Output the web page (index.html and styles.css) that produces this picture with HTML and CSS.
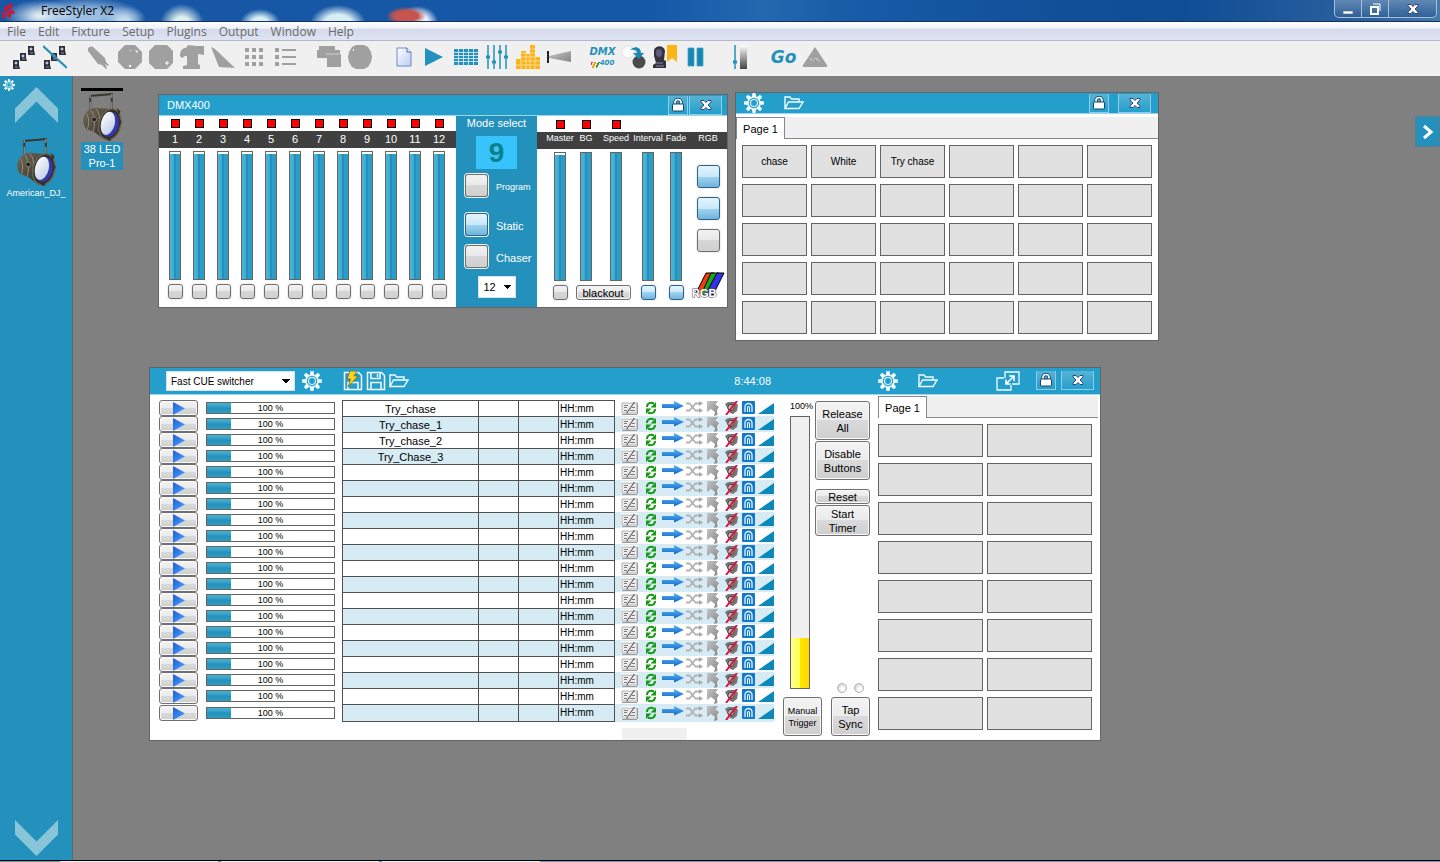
FILE: index.html
```
<!DOCTYPE html>
<html lang="en">
<head>
    <meta charset="UTF-8">
    <meta name="viewport" content="width=device-width, initial-scale=1">
    <title>FreeStyler X2</title>
    <link rel="stylesheet" href="styles.css">
</head>
<body>
    <!-- Shared icons -->
    <svg class="sprite" width="0" height="0" aria-hidden="true">
        <defs>
            <linearGradient id="gBlue" x1="0" y1="0" x2="0" y2="1"><stop offset="0" stop-color="#5cb8f4"/><stop offset="1" stop-color="#0a66c8"/></linearGradient>
            <linearGradient id="gPlay" x1="0" y1="0" x2="1" y2="1"><stop offset="0" stop-color="#1a5fd0"/><stop offset="1" stop-color="#4aa8ff"/></linearGradient>
            <linearGradient id="gGrey" x1="0" y1="0" x2="1" y2="1"><stop offset="0" stop-color="#c4c4c4"/><stop offset="1" stop-color="#858585"/></linearGradient>
            <linearGradient id="gFade" x1="0" y1="0" x2="0" y2="1"><stop offset="0" stop-color="#ffffff"/><stop offset="1" stop-color="#444444"/></linearGradient>
            <linearGradient id="gDoc" x1="0" y1="0" x2="1" y2="1"><stop offset="0" stop-color="#ffffff"/><stop offset="1" stop-color="#b9cdf5"/></linearGradient>
            <linearGradient id="gLens" x1="0" y1="0" x2="1" y2="1"><stop offset="0" stop-color="#ffffff"/><stop offset="1" stop-color="#b9cbe2"/></linearGradient>
            <linearGradient id="gBody" x1="0" y1="0" x2="1" y2="1"><stop offset="0" stop-color="#726a5b"/><stop offset="1" stop-color="#2b251d"/></linearGradient>
        </defs>
        <symbol id="gear" viewBox="0 0 20 20">
            <g fill="#f4fbff">
                <path id="tooth" d="M8.500 0h3l.6 4H7.900z"/>
                <use href="#tooth" transform="rotate(45 10 10)"/><use href="#tooth" transform="rotate(90 10 10)"/>
                <use href="#tooth" transform="rotate(135 10 10)"/><use href="#tooth" transform="rotate(180 10 10)"/>
                <use href="#tooth" transform="rotate(225 10 10)"/><use href="#tooth" transform="rotate(270 10 10)"/>
                <use href="#tooth" transform="rotate(315 10 10)"/>
            </g>
            <circle cx="10" cy="10" r="6" fill="#249fcc" stroke="#f4fbff" stroke-width="1.500"/>
            <circle cx="10" cy="10" r="3.500" fill="none" stroke="#e4f6ff" stroke-width="1.100"/>
        </symbol>
        <symbol id="folder" viewBox="0 0 20 20">
            <path d="M1 15.500V4h5l1.500 2H15v3M1 15.500 4.500 9H19l-4 6.500z" fill="none" stroke="#f4fbff" stroke-width="1.400"/>
        </symbol>
        <symbol id="disk" viewBox="0 0 20 20">
            <path d="M1.500 1.500h14l3 3v14h-17zM5 1.500v6h9v-6M5 18.500v-7h10v7M11.500 3v3" fill="none" stroke="#f4fbff" stroke-width="1.500"/>
        </symbol>
        <symbol id="flashdisk" viewBox="0 0 20 20">
            <path d="M1.500 1.500h14l3 3v14h-17zM5 18.500v-7h10v7" fill="none" stroke="#f4fbff" stroke-width="1.500"/>
            <path d="M7 0h7l-3 5h4L5 16l2.500-8H4z" fill="#ffd21c" stroke="#6b5a1c" stroke-width=".7"/>
        </symbol>
        <symbol id="expand" viewBox="0 0 24 20">
            <path d="M9 7V1h14v12h-7M8 7H1v12h14v-5" fill="none" stroke="#f4fbff" stroke-width="1.300"/>
            <path d="m10.500 12.500 7-7M13 5h5v5M10 8.500V13h4.500" fill="none" stroke="#fff" stroke-width="1.600"/>
        </symbol>
        <symbol id="lock" viewBox="0 0 14 14">
            <path d="M4 7V4.500a3 3 0 0 1 6 0V7" fill="none" stroke="#17446e" stroke-width="3.400"/>
            <path d="M4 7V4.500a3 3 0 0 1 6 0V7" fill="none" stroke="#fff" stroke-width="1.700"/>
            <rect x="1.500" y="6" width="11" height="7" rx="1" fill="#fff" stroke="#17446e"/>
        </symbol>
        <symbol id="cross" viewBox="0 0 12 12">
            <path d="M1 1.500h3l2 2 2-2h3v1.500L8 6l3 3v1.500H8l-2-2-2 2H1V9l3-3-3-3z" fill="#fff" stroke="#31457f"/>
        </symbol>
        <symbol id="parcan" viewBox="0 0 42 52">
            <path d="M9 20V4M31 20V3M8 5 32 3" fill="none" stroke="#3a362f" stroke-width="2"/>
            <path d="M9 20V4M31 20V3" fill="none" stroke="#c5c1b6" stroke-width=".8" stroke-dasharray="9 4"/>
            <path d="M3 25c-2 5-1 10 2 14l7 2 12 9 10-20-7-12-12-1C10 17 5 20 3 25z" fill="url(#gBody)"/>
            <path d="M5 23c3 4 3 11 1 16M10 20c4 6 4 14 2 21M15 18c3 4 4 9 3 13" fill="none" stroke="#958d7d" stroke-width="1"/>
            <circle cx="13" cy="29" r="2.500" fill="#211d18" stroke="#8d867a"/>
            <ellipse cx="29" cy="34" rx="11" ry="16" transform="rotate(14 29 34)" fill="#332e26" stroke="#6b6454" stroke-width="1.500"/>
            <ellipse cx="29" cy="34" rx="9" ry="13" transform="rotate(14 29 34)" fill="#3438a8"/>
            <ellipse cx="27" cy="33" rx="7" ry="12" transform="rotate(14 27 33)" fill="url(#gLens)"/>
            <path d="m36 17 4 4-2 4zM24 47l4 4 3-1zM39 29l2 2-1 4z" fill="#39342b"/>
        </symbol>
        <symbol id="play" viewBox="0 0 12 13"><path d="M0 0l12 6.500L0 13z" fill="url(#gPlay)"/></symbol>
        <symbol id="notes" viewBox="0 0 17 14">
            <rect width="17" height="14" fill="#fff"/>
            <path d="M1 2h6l1 1 1-1h7v10H9l-1 1-1-1H1z" fill="#ececec" stroke="#b4b4b4"/>
            <path d="M3 4.500h4M3 6.500h3M3 9.500h3M9 9.500h5M11 6.500h3" stroke="#7c7c7c"/>
            <path d="M13.500 1 5.500 12.500" stroke="#5f5f5f" stroke-width="1.200"/>
            <path d="M1 13.500h15M16.500 2v11" stroke="#999" fill="none"/>
        </symbol>
        <symbol id="cycle" viewBox="0 0 12 14">
            <path d="M2 6C2 2 6 1 9 2.500M10 8c0 4-4 5-7 3.500" fill="none" stroke="#129a12" stroke-width="2"/>
            <path d="M11 1v5.500H5.500zM1 13V7.500h5.500z" fill="#129a12"/>
        </symbol>
        <symbol id="arrow" viewBox="0 0 22 10"><path d="M0 3h12V0l10 5-10 4.500V7H0z" fill="url(#gBlue)"/></symbol>
        <symbol id="shuffle" viewBox="0 0 17 12">
            <path d="M0 2.500h3.500l6 7H14M0 9.500h3.500l6-7H14" fill="none" stroke="#b4b4b4" stroke-width="1.800"/>
            <path d="M13 0l4 2.500L13 5zM13 7l4 2.500-4 2.500z" fill="#a8a8a8"/>
        </symbol>
        <symbol id="pointer" viewBox="0 0 12 15">
            <path d="M0 0h11L8.500 3.500 12 6l-2 3 .5 5L7 15l1-4-4-3-4 3z" fill="url(#gGrey)"/>
        </symbol>
        <symbol id="mute" viewBox="0 0 13 14">
            <path d="M0 3l3-2h7l3 3-1 6-4 3-3-1z" fill="#777"/>
            <circle cx="6" cy="6.500" r="3.200" fill="#b9b9b9" stroke="#3f3f3f"/>
            <path d="M12 0 1 14" stroke="#e0103a" stroke-width="2"/>
        </symbol>
        <symbol id="magnet" viewBox="0 0 13 13">
            <rect width="13" height="13" rx="1" fill="#1179cf"/>
            <path d="M3 11V6a3.500 3.500 0 0 1 7 0v5" fill="none" stroke="#e8f6ff" stroke-width="1.300"/>
            <path d="M5.500 11V6.500a1 1 0 0 1 2 0V11" fill="none" stroke="#e8f6ff" stroke-width="1.100"/>
        </symbol>
        <symbol id="ramp" viewBox="0 0 16 13"><path d="M0 13 16 2v11z" fill="#0d88b8"/></symbol>
        <symbol id="chain" viewBox="0 0 24 24">
            <g fill="#2a2e38"><path d="M1 15h6v5l1 4H1v-3zM8 8h6v5l1 3H8v-3zM16 1h6v4l1 5h-7V6z"/></g>
            <path d="M3 17h2v2H3zM3 22h3M10 10h2v2h-2zM10 14h3M18 3h2v2h-2zM18 8h3" fill="#dfe7f7" stroke="#a9b4cc" stroke-width=".8"/>
        </symbol>
    </svg>

    <header class="app-title">
        <svg class="app-logo" viewBox="0 0 16 16"><path d="M8 7C6 3 9 0 12 1c2 3-1 5-4 6zM8 8C4 8 3 5 5 3c3 0 3 3 3 5zM8 9c-3-2-7 0-7 2 3 2 6 1 7-2zM8 9c2-3 6-2 7 0-1 3-5 3-7 0zM8 9c3 1 4 4 2 6-3 0-3-4-2-6zM7 10c0 3-2 6-5 5-1-3 2-5 5-5z" fill="#c9183a"/></svg>
        <h1>FreeStyler X2</h1>
        <div class="app-controls">
            <button type="button" aria-label="Minimize"><svg width="12" height="12" viewBox="0 0 12 12"><path d="M1 8h10v3H1z" fill="#fff" stroke="#4b6280" stroke-width=".6"/></svg></button>
            <button type="button" aria-label="Restore"><svg width="12" height="12" viewBox="0 0 12 12"><path d="M4 1h7v7" fill="none" stroke="#fff"/><path d="M2 4h7v7H2z" fill="none" stroke="#fff" stroke-width="2"/></svg></button>
            <button type="button" class="wide" aria-label="Close"><svg width="12" height="12"><use href="#cross"/></svg></button>
        </div>
    </header>

    <nav class="menu">
        <a href="#">File</a>
        <a href="#">Edit</a>
        <a href="#">Fixture</a>
        <a href="#">Setup</a>
        <a href="#">Plugins</a>
        <a href="#">Output</a>
        <a href="#">Window</a>
        <a href="#">Help</a>
    </nav>

    <div class="toolbar">
        <div class="tools">
            <button type="button" aria-label="Select all"><svg viewBox="0 0 24 24"><use href="#chain"/></svg></button>
            <button type="button" aria-label="Deselect all"><svg viewBox="0 0 24 24"><use href="#chain"/><path d="m0 1 24 22" stroke="#2391bb" stroke-width="2.200"/></svg></button>
        </div>
        <div class="tools grey">
            <button type="button" aria-label="Lamp"><svg viewBox="0 0 24 24"><path d="M1 4c0-2 3-3 5-2l12 11 1 4 3 3-1 1-3-2 2 4-1 1-4-4-4-1L1 6z"/></svg></button>
            <button type="button" aria-label="Color"><svg viewBox="0 0 24 24"><path d="M7 0h10l7 7v10l-7 7H7l-7-7V7z"/><path d="m17 5 3 1-1 2zM12 5h1v1h-1zM11 20h2v2h-2z" fill="#fff"/></svg></button>
            <button type="button" aria-label="Gobo"><svg viewBox="0 0 24 24"><path d="M6 0h12l6 6v12l-6 6H6l-6-6V6z"/><path d="M17 17h2v2h-2z" fill="none" stroke="#fff"/></svg></button>
            <button type="button" aria-label="Position"><svg viewBox="0 0 24 24"><path d="M0 11C0 5 3 3 6 3l2-3 8 1h8v9l-6-1v10l2 1v4H3v-3l4-1v-9H5l-3 2z"/></svg></button>
            <button type="button" aria-label="Beam"><svg viewBox="0 0 24 24"><path d="m0 2 4 2 20 19-16-1z"/></svg></button>
            <button type="button" aria-label="Matrix"><svg viewBox="0 0 24 24"><path d="M3 3h4v4H3zM10 3h4v4h-4zM17 3h4v4h-4zM3 10h4v4H3zM10 10h4v4h-4zM17 10h4v4h-4zM3 17h4v4H3zM10 17h4v4h-4zM17 17h4v4h-4z"/></svg></button>
            <button type="button" aria-label="List"><svg viewBox="0 0 24 24"><path d="M2 3h4v4H2zM2 10h4v4H2zM2 17h4v4H2zM9 4h14v2H9zM9 11h14v2H9zM9 18h14v2H9z"/></svg></button>
        </div>
        <div class="tools grey">
            <button type="button" aria-label="Groups"><svg viewBox="0 0 24 24"><path d="M2 1h16v4h5v4h1v13H10v-9H0V5h2z"/><path d="M9 9h14" stroke="#eee" stroke-width=".6"/></svg></button>
            <button type="button" aria-label="Effects"><svg viewBox="0 0 24 24"><path d="M8 0h8l4 2 3 5 1 5-1 5-3 5-4 2H8l-4-2-3-5-1-5 1-5 3-5z"/><path d="M5 4h1v2H5z" fill="#fff"/></svg></button>
        </div>
        <div class="tools">
            <button type="button" aria-label="New"><svg viewBox="0 0 24 24"><path d="M5 3h10l4 4v14H5z" fill="url(#gDoc)" stroke="#6d8ac8"/><path d="M15 3v4h4" fill="#fff" stroke="#4667ad"/></svg></button>
            <button type="button" aria-label="Play"><svg viewBox="0 0 24 24"><path d="m2 3 18 9-18 9z" fill="#2391bb"/></svg></button>
            <button type="button" aria-label="Cues"><svg viewBox="0 0 24 24"><path d="M0 4h24v16H0z" fill="#2391bb"/><path d="M0 7.500h24M0 10.500h24M0 13.500h24M0 16.500h24M4.500 4v16M9.500 4v16M14.500 4v16M19.500 4v16" stroke="#e8f3f7" stroke-width=".8"/></svg></button>
            <button type="button" aria-label="Submasters"><svg viewBox="0 0 24 24"><path d="M3 0v24M9 0v24M15 0v24M21 0v24" stroke="#2391bb" stroke-width="1.500"/><path d="M1 12h4M7 17h4M13 7h4M19 12h4" stroke="#2391bb" stroke-width="3"/></svg></button>
            <button type="button" aria-label="Sound"><svg viewBox="0 0 24 24"><path d="M0 14h5v10H0zM5 6h5v18H5zM10 9h4v15h-4zM14 0h5v24h-5zM19 12h5v12h-5z" fill="#fbb416"/><path d="M14 4h5M5 8h5M14 8h5M5 12h14M5 16h19M0 20h24M5 14v10M10 9v15M14 9v15M19 12v12" stroke="#f7e3b5" stroke-width=".8"/></svg></button>
            <button type="button" aria-label="Horn"><svg viewBox="0 0 24 24"><path d="M0 6h2v12H0z" fill="#222"/><path d="M2 11 24 6v11L2 13z" fill="url(#gGrey)"/></svg></button>
        </div>
        <div class="tools">
            <button type="button" aria-label="DMX400" class="dmx"><span>DMX</span><span class="small">400</span></button>
            <button type="button" aria-label="Cross fade"><svg viewBox="0 0 24 24"><circle cx="6" cy="7" r="6" fill="#fff" stroke="#ccc" stroke-width=".6"/><circle cx="17" cy="17" r="6.500" fill="#4b4b4b"/><path d="M8 5c5-5 11-3 11 3h3l-5 6-6-6h4c0-3-3-4-7-3z" fill="#1a87b5"/></svg></button>
            <button type="button" aria-label="Presets"><svg viewBox="0 0 24 24"><path d="M1 5c2-5 10-5 11 1l-1 9 2 1v7H0v-3l3-2-2-7z" fill="#33323f"/><ellipse cx="6" cy="8" rx="3" ry="4" fill="#605c80"/><path d="M3 18h7M3 21h8" stroke="#8a86a0"/><path d="M14 0h10v17l-5-4-5 4z" fill="#fdb515"/></svg></button>
            <button type="button" aria-label="Pause"><svg viewBox="0 0 24 24"><path d="M4 3h6v18H4zM13 3h6v18h-6z" fill="#1687b2" stroke="#3fa3c6" stroke-width=".8"/></svg></button>
        </div>
        <div class="tools">
            <button type="button" aria-label="Master fader"><svg viewBox="0 0 24 24"><path d="M7 0v24" stroke="#2391bb" stroke-width="1.500"/><path d="M5 17h4" stroke="#2391bb" stroke-width="3"/><path d="M12 0h7v24h-7z" fill="url(#gFade)"/></svg></button>
        </div>
        <div class="tools grey">
            <button type="button" class="go">Go</button>
            <button type="button" aria-label="Warning"><svg viewBox="0 0 24 24"><path d="M12 2 24 20v2H0v-2z"/><path d="M8 13v2M10 15v1M12 13v1M14 13v2M16 15v1" stroke="#fff" stroke-width=".8"/></svg></button>
        </div>
    </div>

    <div class="workspace">
        <aside class="sidebar">
            <button type="button" class="side-gear" aria-label="Settings"><svg width="12" height="12"><use href="#gear"/></svg></button>
            <button type="button" class="chevron" aria-label="Scroll up"><svg width="43" height="36" viewBox="0 0 43 36"><path d="M0 21.500 21.500 0 43 21.500V36L21.500 14.500 0 36z" fill="#88c5d9"/></svg></button>
            <figure class="group">
                <svg width="42" height="51"><use href="#parcan"/></svg>
                <figcaption>American_DJ_</figcaption>
            </figure>
            <button type="button" class="chevron down" aria-label="Scroll down"><svg width="43" height="36" viewBox="0 0 43 36"><path d="M0 14.500 21.500 36 43 14.500V0L21.500 21.500 0 0z" fill="#88c5d9"/></svg></button>
        </aside>

        <main class="desktop">
            <figure class="fixture">
                <svg width="42" height="51"><use href="#parcan"/></svg>
                <figcaption>38 LED<br>Pro-1</figcaption>
            </figure>

            <button type="button" class="flyout" aria-label="Open panel"><svg width="12" height="16" viewBox="0 0 12 16"><path d="m2 2 7 6-7 6" fill="none" stroke="#fff" stroke-width="3"/></svg></button>

            <!-- DMX400 -->
            <section class="window dmx400">
                <header class="bar">
                    <h2>DMX400</h2>
                    <div class="win-buttons">
                        <button type="button" class="lock" aria-label="Lock"><svg width="14" height="14"><use href="#lock"/></svg></button>
                        <button type="button" class="close" aria-label="Close"><svg width="12" height="12"><use href="#cross"/></svg></button>
                    </div>
                </header>
                <div class="dmx-body">
                    <div class="channels" id="channels"></div>
                    <div class="mode">
                        <h3>Mode select</h3>
                        <output class="digit">9</output>
                        <label class="program"><input type="checkbox" class="tick"><span>Program</span></label>
                        <label><input type="radio" name="mode" class="tick" checked><span>Static</span></label>
                        <label><input type="radio" name="mode" class="tick"><span>Chaser</span></label>
                        <select aria-label="Channels"><option>12</option></select>
                    </div>
                    <div class="masters">
                        <div class="led-row"><i class="led"></i><i class="led"></i><i class="led"></i></div>
                        <div class="name-row">
                            <label for="m1">Master</label><label for="m2">BG</label><label for="m3">Speed</label>
                            <label for="m4">Interval</label><label for="m5">Fade</label><span>RGB</span>
                        </div>
                        <div class="fader-row">
                            <input type="range" class="fader" id="m1" value="98">
                            <input type="range" class="fader full" id="m2" value="100">
                            <input type="range" class="fader full" id="m3" value="100">
                            <input type="range" class="fader full" id="m4" value="100">
                            <input type="range" class="fader full" id="m5" value="100">
                            <div class="rgb-ticks">
                                <input type="checkbox" class="tick" aria-label="Red" checked>
                                <input type="checkbox" class="tick" aria-label="Green" checked>
                                <input type="checkbox" class="tick" aria-label="Blue">
                            </div>
                        </div>
                        <div class="foot-row">
                            <input type="checkbox" class="tick small" aria-label="Master flash">
                            <button type="button" class="push blackout">blackout</button>
                            <input type="checkbox" class="tick small" aria-label="Interval on" checked>
                            <input type="checkbox" class="tick small" aria-label="Fade on" checked>
                            <button type="button" class="rgb-logo" aria-label="RGB">
                                <svg width="34" height="28" viewBox="0 0 34 28">
                                    <path d="M15 1h8L14 21H5z" fill="#f03c10" stroke="#000"/><path d="M20 1h8L18 23h-8z" fill="#0fae17" stroke="#000"/><path d="M26 1h7L22 23h-8z" fill="#3232e6" stroke="#000"/>
                                    <text x="1" y="25" class="rgb-text">RGB</text>
                                </svg>
                            </button>
                        </div>
                    </div>
                </div>
            </section>

            <!-- Override buttons -->
            <section class="window override">
                <header class="bar">
                    <div class="bar-icons">
                        <button type="button" aria-label="Settings"><svg width="20" height="20"><use href="#gear"/></svg></button>
                        <button type="button" aria-label="Open"><svg width="20" height="20"><use href="#folder"/></svg></button>
                    </div>
                    <div class="win-buttons">
                        <button type="button" class="lock" aria-label="Lock"><svg width="14" height="14"><use href="#lock"/></svg></button>
                        <button type="button" class="close" aria-label="Close"><svg width="12" height="12"><use href="#cross"/></svg></button>
                    </div>
                </header>
                <div class="tabs"><button type="button" class="tab">Page 1</button></div>
                <div class="pads six" id="overridePads"></div>
            </section>

            <!-- Cue list -->
            <section class="window cues">
                <header class="bar cue-bar">
                    <div class="cue-tools">
                        <select aria-label="Cue mode"><option>Fast CUE switcher</option></select>
                        <button type="button" aria-label="Settings"><svg width="20" height="20"><use href="#gear"/></svg></button>
                        <div class="file-tools">
                            <button type="button" aria-label="Quick save"><svg width="20" height="20"><use href="#flashdisk"/></svg></button>
                            <button type="button" aria-label="Save"><svg width="20" height="20"><use href="#disk"/></svg></button>
                            <button type="button" aria-label="Open"><svg width="20" height="20"><use href="#folder"/></svg></button>
                        </div>
                        <time>8:44:08</time>
                    </div>
                    <div class="page-tools">
                        <button type="button" aria-label="Settings"><svg width="20" height="20"><use href="#gear"/></svg></button>
                        <button type="button" aria-label="Open"><svg width="20" height="20"><use href="#folder"/></svg></button>
                        <button type="button" class="expand" aria-label="Expand"><svg width="24" height="20"><use href="#expand"/></svg></button>
                        <div class="win-buttons">
                            <button type="button" class="lock" aria-label="Lock"><svg width="14" height="14"><use href="#lock"/></svg></button>
                            <button type="button" class="close" aria-label="Close"><svg width="12" height="12"><use href="#cross"/></svg></button>
                        </div>
                    </div>
                </header>
                <div class="cue-body">
                    <div class="cue-list">
                        <table>
                            <tbody id="cueRows"></tbody>
                        </table>
                        <div class="status"></div>
                    </div>
                    <div class="control">
                        <div class="control-top">
                            <div class="level-col">
                                <label for="speed">100%</label>
                                <input type="range" class="fader yellow" id="speed" value="18">
                            </div>
                            <div class="button-col">
                                <button type="button" class="push tall">Release All</button>
                                <button type="button" class="push tall">Disable Buttons</button>
                                <button type="button" class="push reset">Reset</button>
                                <button type="button" class="push timer">Start Timer</button>
                                <div class="lamps"><i></i><i></i></div>
                            </div>
                        </div>
                        <div class="control-foot">
                            <button type="button" class="push tall manual">Manual Trigger</button>
                            <button type="button" class="push tall">Tap Sync</button>
                        </div>
                    </div>
                    <div class="page">
                        <div class="tabs"><button type="button" class="tab">Page 1</button></div>
                        <div class="pads two" id="pagePads"></div>
                    </div>
                </div>
            </section>
        </main>
    </div>

    <footer class="taskbar"><span></span><span></span><span></span></footer>

    <script src="script.js"></script>
</body>
</html>
```
FILE: styles.css
```
* {
    box-sizing: border-box;
}
body {
    margin: 0;
    height: 100vh;
    display: flex;
    flex-direction: column;
    overflow: hidden;
    font-family: "Liberation Sans", Arial, sans-serif;
    font-size: 11px;
    color: #000;
    background: #808080;
}
h1, h2, h3, figure {
    margin: 0;
    font-weight: normal;
}
button, input, select {
    margin: 0;
    padding: 0;
    font-family: inherit;
    font-size: inherit;
    color: inherit;
}
button {
    border: none;
    background: none;
    cursor: pointer;
}
svg {
    display: block;
}
.sprite {
    position: absolute;
}

/* Application frame */
.app-title {
    flex: none;
    display: flex;
    align-items: center;
    height: 22px;
    padding-right: 3px;
    border-bottom: 1px solid #14305c;
    background:
        radial-gradient(ellipse 36px 16px at 40px 16px, rgba(235, 245, 250, 0.9) 10%, transparent),
        radial-gradient(ellipse 60px 18px at 84px 15px, rgba(190, 216, 240, 0.8) 30%, transparent),
        radial-gradient(ellipse 22px 14px at 124px 20px, rgba(213, 232, 242, 0.9) 20%, transparent),
        radial-gradient(ellipse 22px 20px at 182px 24px, #e0f0ec 35%, transparent),
        radial-gradient(ellipse 20px 14px at 260px 23px, #d9eef5 40%, transparent),
        radial-gradient(ellipse 28px 19px at 338px 24px, #d6edf4 50%, transparent),
        radial-gradient(ellipse 20px 9px at 406px 16px, #c5544f 60%, transparent),
        radial-gradient(ellipse 20px 16px at 418px 22px, #e6f0fa 50%, transparent),
        linear-gradient(90deg, #1857a4 0, #1558a8 45%, #2468b0 53%, #175aa5 60%, #114f98 75%, #0f4d95 82%, #2c619f 95%, #4779ad 100%);
}
.app-logo {
    width: 16px;
    height: 16px;
    margin-right: 25px;
}
.app-title h1 {
    font: 12px "Open Sans", "Noto Sans", sans-serif;
}
.app-controls {
    display: flex;
    align-self: flex-start;
    height: 18px;
    margin-left: auto;
    border: 1px solid #a8bfd6;
    border-top: none;
    border-radius: 0 0 5px 5px;
    background: linear-gradient(#6189b3, #2f609a);
}
.app-controls button {
    display: flex;
    align-items: center;
    justify-content: center;
    width: 27px;
    border-right: 1px solid #a8bfd6;
}
.app-controls .wide {
    width: 47px;
    border-right: none;
}
.menu {
    flex: none;
    display: flex;
    align-items: center;
    gap: 12px;
    height: 19px;
    padding-left: 7px;
    border-bottom: 1px solid #b4b9cc;
    background: linear-gradient(#fff 0, #eef1f8 35%, #d5daec 40%, #dfe4f3 100%);
    font: 12px "Open Sans", "Noto Sans", sans-serif;
}
.menu a {
    color: #6a6a6a;
    text-decoration: none;
}
.toolbar {
    flex: none;
    display: flex;
    gap: 13px;
    height: 35px;
    padding: 0 0 3px 8px;
    background: #f0f0f0;
}
.tools {
    display: flex;
    align-items: center;
}
.tools button {
    display: flex;
    justify-content: center;
    align-items: center;
    width: 31px;
    height: 31px;
}
.tools svg {
    width: 24px;
    height: 24px;
}
.grey svg {
    fill: #a0a0a0;
}
.tools .dmx {
    flex-direction: column;
    color: #2391bb;
    font: italic bold 10px "DejaVu Sans", sans-serif;
    line-height: 12px;
}
.tools .dmx .small {
    padding-left: 9px;
    font-size: 7px;
    line-height: 10px;
    background: linear-gradient(115deg, #e33 15%, #f0f0f0 15%, #f0f0f0 30%, #f90 30%, #f90 45%, #f0f0f0 45%, #f0f0f0 60%, #393 60%, #393 75%, #f0f0f0 75%) left bottom / 9px 6px no-repeat;
}
.tools .go {
    color: #2391bb;
    font: italic bold 17px "DejaVu Sans", sans-serif;
}
.workspace {
    flex: 1;
    display: flex;
    min-height: 0;
}
.sidebar {
    display: flex;
    flex-direction: column;
    align-items: center;
    width: 73px;
    padding: 3px 0 4px;
    border-right: 1px solid #556a75;
    background: #2391bb;
    color: #fff;
}
.side-gear {
    align-self: flex-start;
    height: 8px;
    margin-left: 3px;
}
.group {
    display: flex;
    flex-direction: column;
    align-items: center;
    margin-top: 13px;
    font-size: 9px;
    line-height: 12px;
}
.chevron.down {
    margin-top: auto;
}
.desktop {
    position: relative;
    flex: 1;
}
.taskbar {
    flex: none;
    display: flex;
    gap: 3px;
    height: 2px;
    padding-left: 60px;
    border-top: 1px solid #000;
    background: #6f97b5;
}
.taskbar span {
    width: 158px;
    background: #e6f0f5;
}

/* Things placed on the desktop */
.fixture {
    position: absolute;
    left: 8px;
    top: 12px;
    width: 42px;
    border-top: 3px solid #000;
    color: #fff;
    line-height: 14px;
    text-align: center;
}
.fixture figcaption {
    background: #2391bb;
}
.flyout {
    position: absolute;
    right: 0;
    top: 40px;
    display: flex;
    align-items: center;
    justify-content: center;
    width: 25px;
    height: 31px;
    border: 1px solid #5a7d8e;
    background: #2391bb;
}
.window {
    position: absolute;
    border: 1px solid #646464;
    background: #fff;
}
.dmx400 {
    left: 85px;
    top: 18px;
    width: 570px;
}
.override {
    left: 662px;
    top: 16px;
    width: 424px;
}
.cues {
    left: 76px;
    top: 291px;
    width: 952px;
}

/* Window title bars */
.bar {
    display: flex;
    align-items: center;
    justify-content: space-between;
    height: 21px;
    padding-right: 5px;
    border-bottom: 1px solid #9ad6ec;
    background: #249fcc;
    color: #fff;
}
.bar h2 {
    padding-left: 8px;
    font-size: 11px;
}
.bar-icons {
    display: flex;
    gap: 20px;
    padding-left: 8px;
}
.win-buttons {
    display: flex;
    gap: 1px;
    height: 19px;
}
.override .win-buttons {
    gap: 9px;
    padding-right: 2px;
}
.win-buttons button {
    display: flex;
    align-items: center;
    justify-content: center;
    border: 1px solid #8fcde6;
    border-top: none;
    background: linear-gradient(#58b3d4, #249fcc);
}
.lock {
    width: 20px;
}
.close {
    width: 33px;
}

/* DMX400 */
.dmx-body {
    display: flex;
}
.channels {
    display: grid;
    grid-template-columns: repeat(12, 24px);
    width: 297px;
    height: 191px;
    padding-left: 4px;
    background: linear-gradient(#fff 15px, #404040 15px, #404040 32px, #fff 32px);
}
.channel {
    display: flex;
    flex-direction: column;
    align-items: center;
}
.led {
    display: block;
    width: 9px;
    height: 9px;
    border: 1px solid #000;
    background: #f00;
}
.channel .led {
    margin-top: 3px;
}
.channel label {
    margin: 3px 0 4px;
    color: #fff;
    line-height: 16px;
}
.fader {
    appearance: none;
    writing-mode: vertical-lr;
    direction: rtl;
    width: 12px;
    height: 129px;
    border: 1px solid #646464;
    background:
        linear-gradient(#fff 2px, transparent 2px),
        linear-gradient(90deg, #52b5d8 0, #3eabd2 35%, #2391bb 45%, #2391bb 60%, #2d9dc6 65%, #2d9dc6 100%);
}
.fader.full {
    background: linear-gradient(90deg, #52b5d8 0, #3eabd2 35%, #2391bb 45%, #2391bb 60%, #2d9dc6 65%, #2d9dc6 100%);
}
.fader.yellow {
    width: 20px;
    height: 273px;
    background:
        linear-gradient(#f0f0f0 221px, transparent 221px),
        linear-gradient(90deg, #ffff8c 0, #ffff55 50%, #ffe600 50%, #ffd800 100%);
}
.fader::-webkit-slider-thumb,
.level::-webkit-slider-thumb {
    appearance: none;
    width: 0;
    height: 0;
}
.tick {
    appearance: none;
    width: 23px;
    height: 23px;
    border: 1px solid #707070;
    border-radius: 3px;
    background: linear-gradient(#f2f2f2 0, #e8e8e8 50%, #d6d6d6 50%, #d0d0d0 100%);
    box-shadow: 0 0 0 1px #f0f0f0;
}
.tick:checked {
    border-color: #2c628b;
    background: linear-gradient(#e3f4fc 0, #c9e8f8 50%, #a3d3ef 50%, #6eb5dd 100%);
}
.tick.small,
.channel .tick {
    width: 15px;
    height: 15px;
}
.channel .tick {
    margin-top: 4px;
}
.mode {
    display: flex;
    flex-direction: column;
    width: 81px;
    background: #2391bb;
    color: #fff;
}
.mode h3 {
    font-size: 11px;
    line-height: 14px;
    text-align: center;
}
.digit {
    align-self: center;
    width: 41px;
    margin: 6px 0 4px;
    background: #37c3fc;
    color: #0b8088;
    font-size: 28px;
    font-weight: bold;
    line-height: 33px;
    text-align: center;
}
.mode label {
    display: flex;
    align-items: center;
    gap: 8px;
    height: 24px;
    margin-bottom: 8px;
    padding-left: 9px;
}
.mode .program {
    margin-bottom: 15px;
    font-size: 9px;
}
.mode span {
    padding-top: 4px;
}
.mode select {
    align-self: center;
    width: 38px;
    height: 22px;
}
select {
    appearance: none;
    padding-left: 5px;
    border: 1px solid #d5e4ea;
    border-radius: 0;
    background: #fff conic-gradient(from -45deg at 50% 100%, #000 90deg, #fff 0) right 4px center / 8px 4px no-repeat;
    color: #000;
}
.masters {
    flex: 1;
    padding-top: 3px;
}
.led-row,
.name-row,
.fader-row,
.foot-row {
    display: grid;
    grid-template-columns: 26px 26px 34px 30px 26px 38px;
    justify-items: center;
    padding-left: 10px;
}
.led-row {
    height: 13px;
    padding-top: 1px;
}
.name-row {
    height: 17px;
    background: #404040;
    color: #fff;
    font-size: 9px;
    line-height: 12px;
}
.name-row > * {
    display: flex;
    justify-content: center;
    width: 0;
    white-space: nowrap;
}
.fader-row {
    padding-top: 3px;
}
.rgb-ticks {
    display: flex;
    flex-direction: column;
    gap: 9px;
    padding-top: 13px;
}
.foot-row {
    height: 22px;
    padding-top: 4px;
}
.blackout {
    grid-column: span 2;
    width: 55px;
    height: 15px;
}
.rgb-logo {
    height: 15px;
    display: flex;
    align-items: flex-end;
}
.rgb-text {
    fill: #fff;
    stroke: #555;
    stroke-width: 1px;
    paint-order: stroke;
    font-size: 11px;
    font-weight: bold;
}
.push {
    border: 1px solid #707070;
    border-radius: 3px;
    background: linear-gradient(#f3f3f3 0, #ebebeb 48%, #dadada 50%, #cfcfcf 100%);
    box-shadow: inset 0 0 0 1px #f8f8f8;
    line-height: 14px;
}
.blackout,
.reset {
    line-height: 12px;
}

/* Tabs and pads */
.tabs {
    display: flex;
    height: 22px;
    border-bottom: 1px solid #828790;
    background: #f0f0f0;
}
.tab {
    width: 49px;
    height: 22px;
    border: 1px solid #828790;
    border-bottom: none;
    background: #fff;
}
.override .tabs {
    margin-top: 3px;
}
.pads {
    display: grid;
    gap: 6px 4px;
    padding: 6px;
}
.six {
    grid-template-columns: repeat(6, 1fr);
}
.two {
    grid-template-columns: 1fr 1fr;
    padding-left: 0;
}
.pads button {
    height: 33px;
    border: 1px solid #646464;
    background: #e1e1e1;
    font-size: 10px;
}

/* Cue list */
.cue-bar {
    height: 27px;
    padding-right: 0;
}
.cue-bar,
.cue-body {
    display: grid;
    grid-template-columns: 633px 95px 1fr;
}
.cue-tools {
    display: flex;
    align-items: center;
    gap: 7px;
    padding: 0 12px 0 16px;
}
.cue-tools select {
    width: 129px;
    height: 20px;
    padding-left: 4px;
    font-size: 10px;
}
.file-tools {
    display: flex;
    gap: 3px;
    padding-left: 14px;
}
.cue-tools time {
    margin-left: auto;
}
.page-tools {
    grid-column: 3;
    display: flex;
    align-items: center;
    gap: 20px;
    padding-right: 6px;
}
.page-tools .expand {
    margin-left: auto;
}
.page-tools .win-buttons {
    align-self: flex-start;
    gap: 5px;
    margin-left: -4px;
}
.cue-list {
    padding: 5px 0 0 9px;
}
table {
    table-layout: fixed;
    width: 615px;
    border-spacing: 0;
}
td {
    height: 16px;
    padding: 0;
    line-height: 14px;
}
.col-play {
    width: 47px;
}
.col-level {
    width: 136px;
}
.col-name {
    width: 137px;
    border-left: 1px solid #505050;
    text-align: center;
}
.col-gap {
    width: 40px;
}
.col-time {
    width: 56px;
    padding-left: 1px;
    font-size: 10px;
}
.col-name,
.col-gap,
.col-time {
    border-top: 1px solid #505050;
    border-right: 1px solid #505050;
}
tr:last-child td {
    height: 18px;
}
tr:last-child .col-name,
tr:last-child .col-gap,
tr:last-child .col-time {
    border-bottom: 1px solid #505050;
}
tr:nth-child(even) .shade {
    background: #d6ebf4;
}
.play {
    display: flex;
    align-items: center;
    justify-content: center;
    width: 39px;
    height: 16px;
}
.level-box {
    display: grid;
    width: 129px;
    height: 12px;
}
.level-box > * {
    grid-area: 1 / 1;
}
.level-box span {
    font-size: 9px;
    line-height: 12px;
    text-align: center;
    pointer-events: none;
}
.level {
    appearance: none;
    width: 129px;
    height: 12px;
    border: 1px solid #646464;
    background:
        linear-gradient(90deg, transparent 24px, #fff 24px),
        linear-gradient(#4cb0d3 0, #2f9fc8 40%, #2391bb 50%, #2d9dc6 100%);
}
.icons {
    display: grid;
    grid-template-columns: 24px 17px 24px 21px 18px 17px 16px 16px;
    align-items: start;
    height: 15px;
    padding-left: 6px;
}
.status {
    width: 65px;
    height: 12px;
    margin: 6px 0 0 463px;
    background: #f0f0f0;
}
.control {
    padding-top: 6px;
}
.control-top {
    display: flex;
    height: 292px;
    margin-bottom: 4px;
}
.level-col {
    width: 32px;
    padding-left: 7px;
    font-size: 9px;
}
.level-col label {
    display: block;
    height: 15px;
}
.button-col {
    display: flex;
    flex-direction: column;
    gap: 1px;
    width: 55px;
}
.tall {
    height: 39px;
}
.reset {
    height: 15px;
    margin-top: 8px;
}
.button-col .push {
    padding: 0 4px;
}
.timer {
    height: 31px;
}
.lamps {
    display: flex;
    justify-content: flex-end;
    gap: 7px;
    margin-top: auto;
    padding-right: 6px;
}
.lamps i {
    width: 10px;
    height: 10px;
    border: 1px solid #b5b5b5;
    border-radius: 50%;
    background: radial-gradient(circle at 60% 60%, #fff 20%, #bdbdbd);
}
.control-foot {
    display: flex;
    gap: 9px;
}
.control-foot .push {
    width: 39px;
}
.control-foot .manual {
    font-size: 9px;
    line-height: 12px;
}
.page {
    padding: 1px 2px 0 0;
}
```
FILE: script.js
```
const cueNames = ['Try_chase', 'Try_chase_1', 'Try_chase_2', 'Try_Chase_3'];
const padNames = ['chase', 'White', 'Try chase'];

// name, label, width, height
const rowIcons = [
    ['notes', 'Notes', 17, 14],
    ['cycle', 'Loop', 12, 14],
    ['arrow', 'Direction', 22, 10],
    ['shuffle', 'Random', 17, 12],
    ['pointer', 'Release', 12, 15],
    ['mute', 'Sound', 13, 14],
    ['magnet', 'Latch', 13, 13],
    ['ramp', 'Fade', 16, 13]
];

let channels = '';
for (let i = 1; i <= 12; i++) {
    channels += `<div class="channel">
        <i class="led"></i>
        <label for="ch${i}">${i}</label>
        <input type="range" class="fader" id="ch${i}" value="98">
        <input type="checkbox" class="tick" aria-label="Flash ${i}">
    </div>`;
}
document.getElementById('channels').innerHTML = channels;

let pads = '';
for (let i = 0; i < 30; i++) {
    pads += `<button type="button">${padNames[i] || ''}</button>`;
}
document.getElementById('overridePads').innerHTML = pads;
document.getElementById('pagePads').innerHTML = '<button type="button"></button>'.repeat(16);

const icons = rowIcons.map(([id, label, w, h]) =>
    `<button type="button" aria-label="${label}"><svg width="${w}" height="${h}"><use href="#${id}"/></svg></button>`
).join('');

let rows = '';
for (let i = 0; i < 20; i++) {
    rows += `<tr>
        <td class="col-play"><button type="button" class="push play" aria-label="Play ${i + 1}"><svg width="12" height="13"><use href="#play"/></svg></button></td>
        <td class="col-level"><div class="level-box"><input type="range" class="level" aria-label="Level ${i + 1}" value="20"><span>100 %</span></div></td>
        <td class="col-name shade">${cueNames[i] || ''}</td>
        <td class="col-gap shade"></td>
        <td class="col-gap shade"></td>
        <td class="col-time shade">HH:mm</td>
        <td class="shade"><div class="icons">${icons}</div></td>
    </tr>`;
}
document.getElementById('cueRows').innerHTML = rows;
```
